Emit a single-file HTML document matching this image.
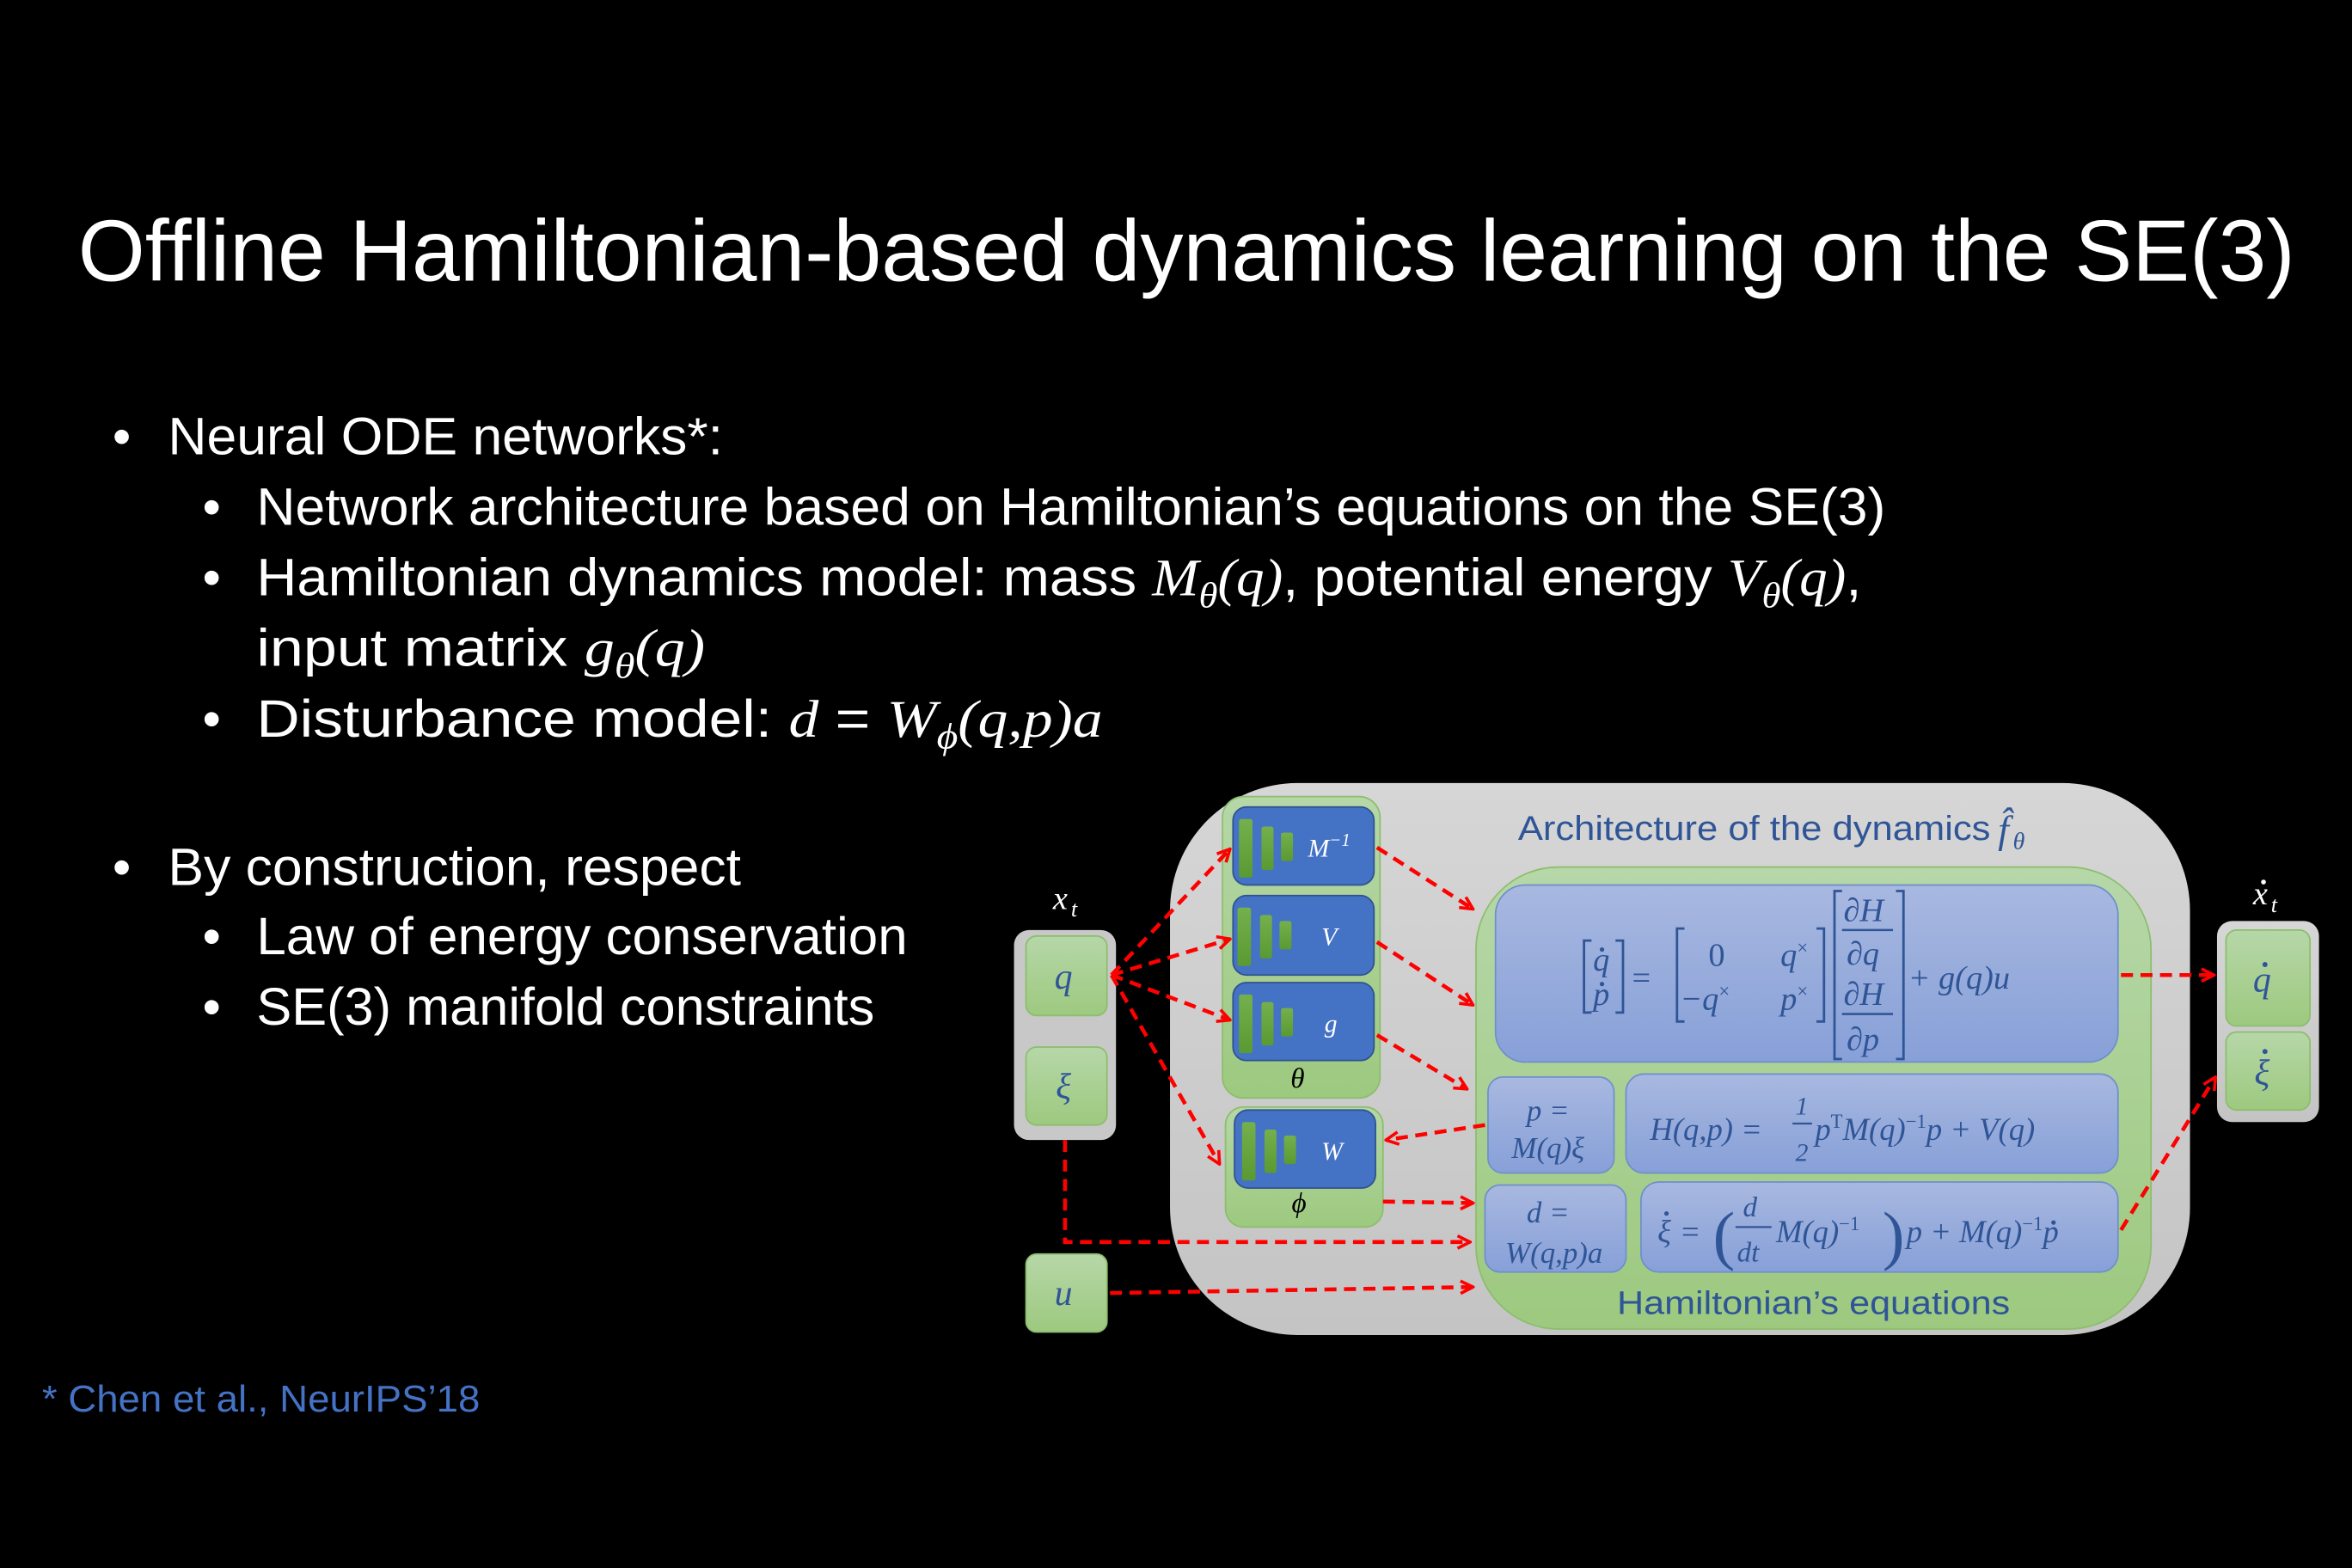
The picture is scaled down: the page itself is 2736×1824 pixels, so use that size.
<!DOCTYPE html>
<html><head><meta charset="utf-8"><style>
html,body{margin:0;padding:0;background:#000;}
svg{display:block;}
.t{font-family:"Liberation Sans",sans-serif;fill:#fff;}
.m{font-family:"Liberation Serif",serif;font-style:italic;}
.e{font-family:"Liberation Serif",serif;font-style:italic;fill:#2F5597;}
.a{stroke:#f00;stroke-width:2.6;stroke-dasharray:8 5;fill:none;marker-end:url(#ar);}
</style></head><body>
<svg width="2736" height="1824" viewBox="0 0 1568 1045.3" preserveAspectRatio="none" xmlns="http://www.w3.org/2000/svg">
<defs>
<marker id="ar" viewBox="0 0 10 10" refX="9" refY="5" markerWidth="4" markerHeight="4" orient="auto" markerUnits="strokeWidth"><path d="M1 1 L9 5 L1 9" stroke="#f00" stroke-width="2" fill="none"/></marker>
<linearGradient id="gr" x1="0" y1="0" x2="0" y2="1"><stop offset="0" stop-color="#d6d6d6"/><stop offset="1" stop-color="#c4c4c4"/></linearGradient>
<linearGradient id="gn" x1="0" y1="0" x2="0" y2="1"><stop offset="0" stop-color="#b6d7a8"/><stop offset="1" stop-color="#9dc97f"/></linearGradient>
<linearGradient id="bl" x1="0" y1="0" x2="0" y2="1"><stop offset="0" stop-color="#a8b8e0"/><stop offset="1" stop-color="#87a0d8"/></linearGradient>
<linearGradient id="bar" x1="0" y1="0" x2="0" y2="1"><stop offset="0" stop-color="#74b04c"/><stop offset="1" stop-color="#5a9a32"/></linearGradient>
<g id="bars"><rect x="4" y="8" width="9" height="39" rx="1.5" fill="url(#bar)"/><rect x="19" y="13" width="8" height="29" rx="1.5" fill="url(#bar)"/><rect x="32" y="17" width="8" height="19" rx="1.5" fill="url(#bar)"/></g>
</defs>
<rect width="1568" height="1046" fill="#000"/>
<text class="t" x="52" y="187" font-size="58" textLength="1478" lengthAdjust="spacingAndGlyphs">Offline Hamiltonian-based dynamics learning on the SE(3)</text>
<g class="t" font-size="35">
<text x="75" y="303">•</text><text x="112" y="303" textLength="370" lengthAdjust="spacingAndGlyphs">Neural ODE networks*:</text>
<text x="135" y="350">•</text><text x="171" y="350" textLength="1086" lengthAdjust="spacingAndGlyphs">Network architecture based on Hamiltonian’s equations on the SE(3)</text>
<text x="135" y="397">•</text><text x="171" y="397" textLength="1070" lengthAdjust="spacingAndGlyphs">Hamiltonian dynamics model: mass <tspan class="m">M</tspan><tspan class="m" font-size="24" dy="8">θ</tspan><tspan class="m" dy="-8">(q)</tspan>, potential energy <tspan class="m">V</tspan><tspan class="m" font-size="24" dy="8">θ</tspan><tspan class="m" dy="-8">(q)</tspan>,</text>
<text x="171" y="444" textLength="299" lengthAdjust="spacingAndGlyphs">input matrix <tspan class="m">g</tspan><tspan class="m" font-size="24" dy="8">θ</tspan><tspan class="m" dy="-8">(q)</tspan></text>
<text x="135" y="491">•</text><text x="171" y="491" textLength="564" lengthAdjust="spacingAndGlyphs">Disturbance model: <tspan class="m">d</tspan> = <tspan class="m">W</tspan><tspan class="m" font-size="24" dy="8">ϕ</tspan><tspan class="m" dy="-8">(q,p)a</tspan></text>
<text x="75" y="590">•</text><text x="112" y="590" textLength="382" lengthAdjust="spacingAndGlyphs">By construction, respect</text>
<text x="135" y="636">•</text><text x="171" y="636" textLength="434" lengthAdjust="spacingAndGlyphs">Law of energy conservation</text>
<text x="135" y="683">•</text><text x="171" y="683" textLength="412" lengthAdjust="spacingAndGlyphs">SE(3) manifold constraints</text>
</g>
<text x="28" y="941" font-family="Liberation Sans,sans-serif" font-size="25" fill="#4472C4" textLength="292" lengthAdjust="spacingAndGlyphs">* Chen et al., NeurIPS’18</text>

<rect x="780" y="522" width="680" height="368" rx="85" fill="url(#gr)"/>
<text x="1012" y="560" font-family="Liberation Sans,sans-serif" font-size="23" fill="#2F5597" textLength="315" lengthAdjust="spacingAndGlyphs">Architecture of the dynamics</text>
<text x="1332" y="562" class="e" font-size="26">f̂</text><text x="1342" y="566" class="e" font-size="16">θ</text>

<text x="702" y="606" class="m" font-size="22" fill="#fff">x</text><text x="714" y="611" class="m" font-size="15" fill="#fff">t</text>
<rect x="676" y="620" width="68" height="140" rx="10" fill="#c8c8c8"/>
<rect x="684" y="624" width="54" height="53" rx="7" fill="url(#gn)" stroke="#8cbd6c"/>
<rect x="684" y="698" width="54" height="52" rx="7" fill="url(#gn)" stroke="#8cbd6c"/>
<text x="709" y="659" class="e" font-size="24" text-anchor="middle">q</text>
<text x="709" y="732" class="e" font-size="24" text-anchor="middle">ξ</text>
<rect x="684" y="836" width="54" height="52" rx="7" fill="url(#gn)" stroke="#8cbd6c"/>
<text x="709" y="870" class="e" font-size="24" text-anchor="middle">u</text>

<text x="1502" y="603" class="m" font-size="22" fill="#fff">x</text><circle cx="1509" cy="588" r="1.6" fill="#fff"/><text x="1514" y="608" class="m" font-size="15" fill="#fff">t</text>
<rect x="1478" y="614" width="68" height="134" rx="10" fill="url(#gr)"/>
<rect x="1484" y="620" width="56" height="64" rx="7" fill="url(#gn)" stroke="#8cbd6c"/>
<rect x="1484" y="688" width="56" height="52" rx="7" fill="url(#gn)" stroke="#8cbd6c"/>
<text x="1508" y="661" class="e" font-size="24" text-anchor="middle">q</text><circle cx="1510" cy="643" r="1.7" fill="#2F5597"/>
<text x="1508" y="723" class="e" font-size="24" text-anchor="middle">ξ</text><circle cx="1510" cy="701" r="1.7" fill="#2F5597"/>

<rect x="815" y="531" width="105" height="201" rx="14" fill="url(#gn)" stroke="#8cbd6c"/>
<rect x="822" y="538" width="94" height="52" rx="9" fill="#4472C4" stroke="#2f528f"/>
<use href="#bars" x="822" y="538"/>
<text x="872" y="571" class="m" font-size="17" fill="#fff">M<tspan font-size="12" dy="-7">−1</tspan></text>
<rect x="822" y="597" width="94" height="53" rx="9" fill="#4472C4" stroke="#2f528f"/>
<use href="#bars" x="821" y="597"/>
<text x="881" y="630" class="m" font-size="17" fill="#fff">V</text>
<rect x="822" y="655" width="94" height="52" rx="9" fill="#4472C4" stroke="#2f528f"/>
<use href="#bars" x="822" y="655"/>
<text x="883" y="688" class="m" font-size="17" fill="#fff">g</text>
<text x="865" y="725" class="m" font-size="19" fill="#000" text-anchor="middle">θ</text>
<rect x="817" y="738" width="105" height="80" rx="12" fill="url(#gn)" stroke="#8cbd6c"/>
<rect x="823" y="740" width="94" height="52" rx="9" fill="#4472C4" stroke="#2f528f"/>
<use href="#bars" x="824" y="740"/>
<text x="881" y="773" class="m" font-size="17" fill="#fff">W</text>
<text x="866" y="808" class="m" font-size="19" fill="#000" text-anchor="middle">ϕ</text>

<rect x="984" y="578" width="450" height="308" rx="55" fill="url(#gn)" stroke="#8cbd6c"/>
<rect x="997" y="590" width="415" height="118" rx="20" fill="url(#bl)" stroke="#6f8fcb"/>
<g class="e" font-size="22">
<path d="M1061 627h-5v48h5M1077 627h5v48h-5" stroke="#2F5597" stroke-width="1.6" fill="none"/>
<text x="1062" y="647">q</text><circle cx="1068" cy="633" r="1.5" fill="#2F5597"/>
<text x="1062" y="670">p</text><circle cx="1068" cy="656" r="1.5" fill="#2F5597"/>
<text x="1088" y="659" font-style="normal">=</text>
<path d="M1123 619h-5v62h5M1211 619h5v62h-5" stroke="#2F5597" stroke-width="1.6" fill="none"/>
<text x="1139" y="644" font-style="normal">0</text><text x="1187" y="644">q<tspan font-size="13" dy="-8" font-style="normal">×</tspan></text>
<text x="1120" y="673">−q<tspan font-size="13" dy="-8" font-style="normal">×</tspan></text><text x="1187" y="673">p<tspan font-size="13" dy="-8" font-style="normal">×</tspan></text>
<path d="M1228 594h-5v112h5M1264 594h5v112h-5" stroke="#2F5597" stroke-width="1.6" fill="none"/>
<text x="1229" y="614">∂H</text><line x1="1228" y1="620" x2="1262" y2="620" stroke="#2F5597" stroke-width="1.5"/>
<text x="1231" y="643">∂q</text>
<text x="1229" y="670">∂H</text><line x1="1228" y1="676" x2="1262" y2="676" stroke="#2F5597" stroke-width="1.5"/>
<text x="1231" y="700">∂p</text>
<text x="1272" y="659">+ g(q)u</text>
</g>
<rect x="992" y="718" width="84" height="64" rx="10" fill="url(#bl)" stroke="#6f8fcb"/>
<text x="1032" y="747" class="e" font-size="20" text-anchor="middle">p =</text>
<text x="1032" y="772" class="e" font-size="20" text-anchor="middle">M(q)ξ</text>
<rect x="1084" y="716" width="328" height="66" rx="12" fill="url(#bl)" stroke="#6f8fcb"/>
<text x="1100" y="760" class="e" font-size="21">H(q,p) =</text>
<text x="1197" y="743" class="e" font-size="17" font-style="normal">1</text><line x1="1195" y1="749" x2="1208" y2="749" stroke="#2F5597" stroke-width="1.3"/><text x="1197" y="774" class="e" font-size="17" font-style="normal">2</text>
<text x="1210" y="760" class="e" font-size="21">p<tspan font-size="13" dy="-8" font-style="normal">T</tspan><tspan dy="8">M(q)</tspan><tspan font-size="13" dy="-8" font-style="normal">−1</tspan><tspan dy="8">p + V(q)</tspan></text>
<rect x="990" y="790" width="94" height="58" rx="10" fill="url(#bl)" stroke="#6f8fcb"/>
<text x="1032" y="815" class="e" font-size="20" text-anchor="middle">d =</text>
<text x="1036" y="842" class="e" font-size="20" text-anchor="middle">W(q,p)a</text>
<rect x="1094" y="788" width="318" height="60" rx="12" fill="url(#bl)" stroke="#6f8fcb"/>
<g class="e" font-size="21">
<text x="1105" y="828">ξ</text><circle cx="1111" cy="809" r="1.5" fill="#2F5597"/><text x="1121" y="828" font-style="normal">=</text>
<text x="1142" y="838" font-size="44" font-style="normal">(</text>
<text x="1162" y="811" font-size="19">d</text><line x1="1157" y1="818" x2="1181" y2="818" stroke="#2F5597" stroke-width="1.3"/><text x="1158" y="841" font-size="19">dt</text>
<text x="1184" y="828">M(q)<tspan font-size="13" dy="-8" font-style="normal">−1</tspan></text>
<text x="1255" y="838" font-size="44" font-style="normal">)</text>
<text x="1271" y="828">p + M(q)<tspan font-size="13" dy="-8" font-style="normal">−1</tspan><tspan dy="8">p</tspan></text>
</g>
<circle cx="1369" cy="815" r="1.5" fill="#2F5597"/>
<text x="1209" y="876" font-family="Liberation Sans,sans-serif" font-size="22" fill="#2F5597" text-anchor="middle" textLength="262" lengthAdjust="spacingAndGlyphs">Hamiltonian’s equations</text>

<path class="a" d="M741 650 L820 566"/>
<path class="a" d="M741 650 L820 626"/>
<path class="a" d="M741 650 L820 680"/>
<path class="a" d="M741 650 L813 776"/>
<path class="a" d="M918 565 L982 606"/>
<path class="a" d="M918 628 L982 670"/>
<path class="a" d="M918 690 L978 726"/>
<path class="a" d="M990 750 L924 760"/>
<path class="a" d="M922 801 L982 802"/>
<path class="a" d="M710 760 L710 828 L980 828"/>
<path class="a" d="M740 862 L982 858"/>
<path class="a" d="M1414 650 L1476 650"/>
<path class="a" d="M1414 820 L1477 718"/>
</svg>
</body></html>
